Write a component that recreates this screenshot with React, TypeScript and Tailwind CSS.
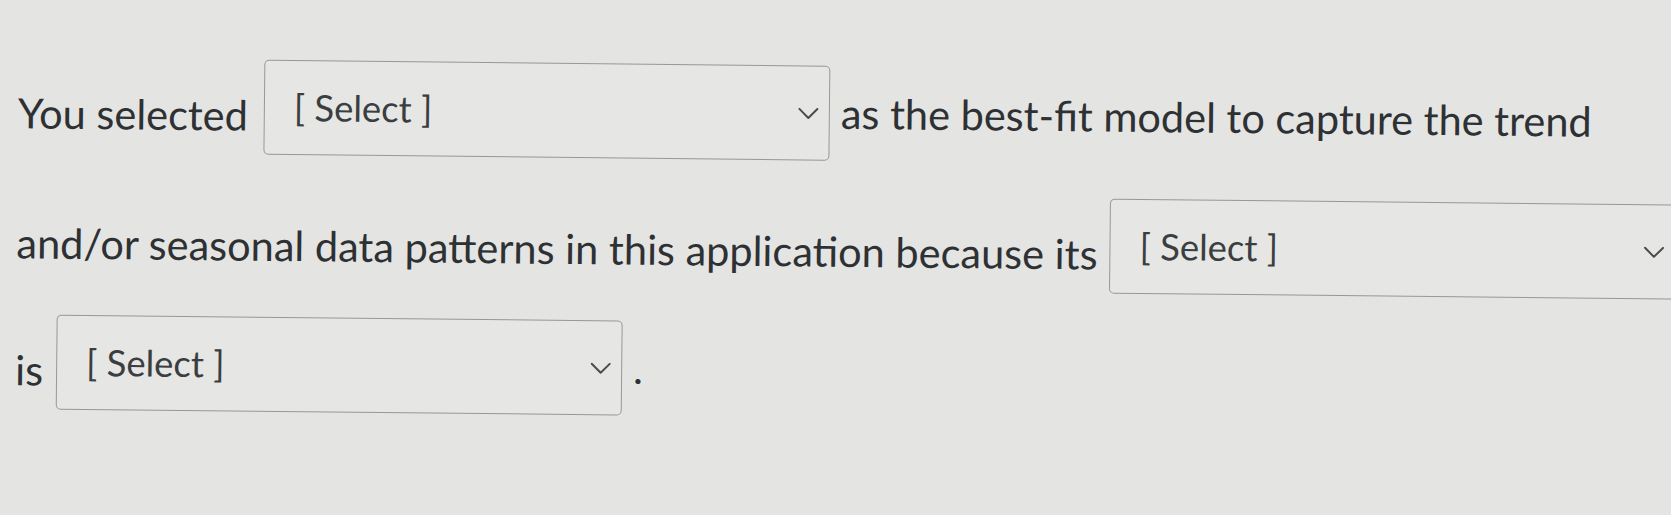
import React from "react";

// Dropdown used inline in the fill-in-the-blank question
function BlankSelect() {
  return (
    <div className="flex h-[95px] w-[566px] shrink-0 items-center justify-between rounded-[5px] border-[1.5px] border-[#979897] bg-[#e6e6e4] pl-[29px] pr-[10px]">
      <span className="text-[36.5px] leading-none text-[#3b3e41]">[ Select ]</span>
      <svg
        width="21"
        height="12"
        viewBox="0 0 21 12"
        fill="none"
        stroke="#4a4d50"
        strokeWidth="2"
        strokeLinecap="round"
        strokeLinejoin="round"
      >
        <polyline points="1.5,1.5 10.5,10.5 19.5,1.5" />
      </svg>
    </div>
  );
}

function Words({ children }: { children: React.ReactNode }) {
  return <span className="whitespace-nowrap pt-[16px] leading-none">{children}</span>;
}

export default function App() {
  return (
    <div className="h-screen w-full overflow-hidden bg-[#e4e4e2] text-[#2e3134]">
      <div className="origin-top-left rotate-[0.6deg] pl-[19px] pt-[57px] font-['Lato','Noto_Sans',sans-serif] text-[41.5px]">
        <div className="flex items-center">
          <Words>You selected</Words>
          <div className="ml-[16px]">
            <BlankSelect />
          </div>
          <div className="ml-[11px]">
            <Words>as the best-fit model to capture the trend</Words>
          </div>
        </div>

        <div className="mt-[35px] flex items-center">
          <Words>and/or seasonal data patterns in this application because its</Words>
          <div className="ml-[12px]">
            <BlankSelect />
          </div>
        </div>

        <div className="mt-[32px] flex items-center">
          <Words>is</Words>
          <div className="ml-[13px]">
            <BlankSelect />
          </div>
          <div className="ml-[11px]">
            <Words>.</Words>
          </div>
        </div>
      </div>
    </div>
  );
}
